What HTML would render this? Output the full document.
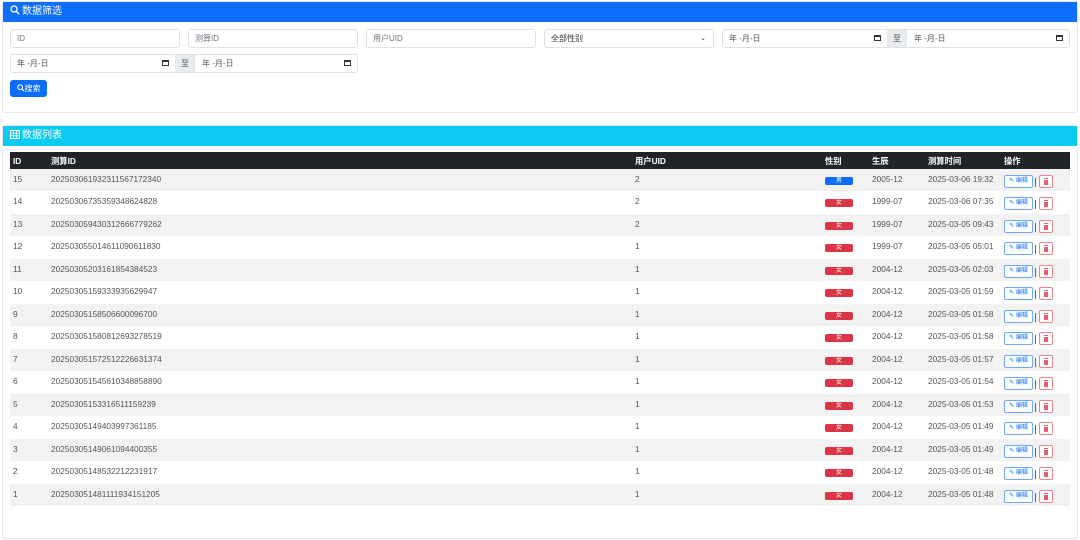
<!DOCTYPE html>
<html><head><meta charset="utf-8"><style>
*{box-sizing:border-box;margin:0;padding:0}
body{width:1080px;height:540px;background:#fff;font-family:"Liberation Sans","Noto Sans CJK SC",sans-serif;position:relative;overflow:hidden;color:#212529}
.card{position:absolute;left:2px;width:1076px;border:1px solid #e3e6ea;border-radius:3px}
.hd{height:20px;color:#fff;font-size:10px;line-height:20px;padding-left:7px}
.hd svg{vertical-align:-1px;margin-right:2px}
.in{position:absolute;height:19px;border:1px solid #dee2e6;border-radius:3px;font-size:8px;color:#6c757d;line-height:17px;padding-left:6px;background:#fff}
.cal{position:absolute;width:7px;height:6px;border:1px solid #333;border-top-width:2px;top:5px}
.zhi{position:absolute;top:0;height:17px;background:#e9ecef;font-size:8px;line-height:17px;text-align:center;color:#555}
table{position:absolute;left:10px;top:152px;width:1060px;border-collapse:collapse;font-size:8.3px}
th{background:#212529;color:#fff;text-align:left;height:17px;font-weight:bold;padding:0}
td{height:22.47px;padding:0;color:#555;vertical-align:top;padding-top:5px}
tr:nth-child(odd) td{background:#f2f2f2}
.b{display:inline-block;width:28px;height:8px;border-radius:2px;color:#fff;font-size:6px;line-height:8px;text-align:center;margin-top:1px}
.e{display:inline-block;width:29px;height:13px;border:1px solid #6ea8fe;border-radius:2px;color:#0d6efd;font-size:6px;line-height:11px;text-align:center;margin-top:1px;background:#fff}
.d{display:inline-block;width:14px;height:13px;border:1px solid #ea868f;border-radius:2px;margin-left:6px;position:relative;vertical-align:top;margin-top:1px;background:#fff}
.d:before{content:"";position:absolute;left:-5px;top:2px;width:1px;height:9px;background:#666}
.d:after{content:"";position:absolute;left:4px;top:3px;width:4px;height:5px;background:#e35d6a;border-top:1px solid #fff;box-shadow:0 -1px 0 #e35d6a}
</style></head><body>
<div class="card" style="top:1px;height:112px">
<div class="hd" style="background:#0d6efd"><svg width="10" height="10" viewBox="0 0 10 10"><circle cx="4" cy="4" r="3" fill="none" stroke="#fff" stroke-width="1.3"/><path d="M6.2 6.2 9 9" stroke="#fff" stroke-width="1.4"/></svg>数据筛选</div>
</div>
<div class="in" style="left:10px;top:29px;width:170px">ID</div>
<div class="in" style="left:188px;top:29px;width:170px">测算ID</div>
<div class="in" style="left:366px;top:29px;width:170px">用户UID</div>
<div class="in" style="left:544px;top:29px;width:170px;color:#333">全部性别<span style="position:absolute;right:7px;font-size:7px">&#8964;</span></div>
<div class="in" style="left:722px;top:29px;width:348px;color:#555">年 -月-日<div class="cal" style="left:151px"></div><div class="zhi" style="left:164px;width:20px">至</div><span style="position:absolute;left:191px">年 -月-日</span><div class="cal" style="right:6px"></div></div>
<div class="in" style="left:10px;top:54px;width:348px;color:#555">年 -月-日<div class="cal" style="left:151px"></div><div class="zhi" style="left:164px;width:20px">至</div><span style="position:absolute;left:191px">年 -月-日</span><div class="cal" style="right:6px"></div></div>
<div style="position:absolute;left:10px;top:80px;width:37px;height:17px;background:#0d6efd;border-radius:3px;color:#fff;font-size:8px;line-height:17px;text-align:center"><svg width="8" height="8" viewBox="0 0 10 10" style="vertical-align:-1px"><circle cx="4" cy="4" r="3" fill="none" stroke="#fff" stroke-width="1.3"/><path d="M6.2 6.2 9 9" stroke="#fff" stroke-width="1.4"/></svg>搜索</div>
<div class="card" style="top:125px;height:414px">
<div class="hd" style="background:#0dcaf0"><svg width="10" height="9" viewBox="0 0 10 9"><rect x="0.5" y="0.5" width="9" height="8" fill="none" stroke="#fff"/><path d="M0.5 3.2h9M0.5 5.8h9M3.5 .5v8M6.5 .5v8" stroke="#fff" stroke-width=".8"/></svg>数据列表</div>
</div>
<table>
<tr><th style="width:41px;padding-left:3px">ID</th><th style="width:584px">测算ID</th><th style="width:190px">用户UID</th><th style="width:47px">性别</th><th style="width:56px">生辰</th><th style="width:76px">测算时间</th><th>操作</th></tr>
<tbody id="tb"></tbody>
</table>
<script>
var r=[[15,"20250306193231156717234 0","2","男","2005-12","2025-03-06 19:32"],
[14,"20250306735359348624828","2","女","1999-07","2025-03-06 07:35"],
[13,"20250305943031266677926 2","2","女","1999-07","2025-03-05 09:43"],
[12,"20250305501461109061183 0","1","女","1999-07","2025-03-05 05:01"],
[11,"20250305203161854384523","1","女","2004-12","2025-03-05 02:03"],
[10,"20250305159333935629947","1","女","2004-12","2025-03-05 01:59"],
[9,"20250305158506600096700","1","女","2004-12","2025-03-05 01:58"],
[8,"20250305158081269327851 9","1","女","2004-12","2025-03-05 01:58"],
[7,"20250305157251222663137 4","1","女","2004-12","2025-03-05 01:57"],
[6,"20250305154561034885889 0","1","女","2004-12","2025-03-05 01:54"],
[5,"20250305153316511159239","1","女","2004-12","2025-03-05 01:53"],
[4,"20250305149403997361185","1","女","2004-12","2025-03-05 01:49"],
[3,"20250305149061094400355","1","女","2004-12","2025-03-05 01:49"],
[2,"20250305148532212231917","1","女","2004-12","2025-03-05 01:48"],
[1,"20250305148111193415120 5","1","女","2004-12","2025-03-05 01:48"]];
var h="";r.forEach(function(x){h+='<tr><td style="padding-left:3px">'+x[0]+'</td><td>'+x[1].replace(/ /g,"")+'</td><td>'+x[2]+'</td><td><span class="b" style="background:'+(x[3]=="男"?"#0d6efd":"#dc3545")+'">'+x[3]+'</span></td><td>'+x[4]+'</td><td>'+x[5]+'</td><td><span class="e">&#9998; 编辑</span><span class="d"></span></td></tr>'});
document.getElementById("tb").innerHTML=h;
</script>
</body></html>
